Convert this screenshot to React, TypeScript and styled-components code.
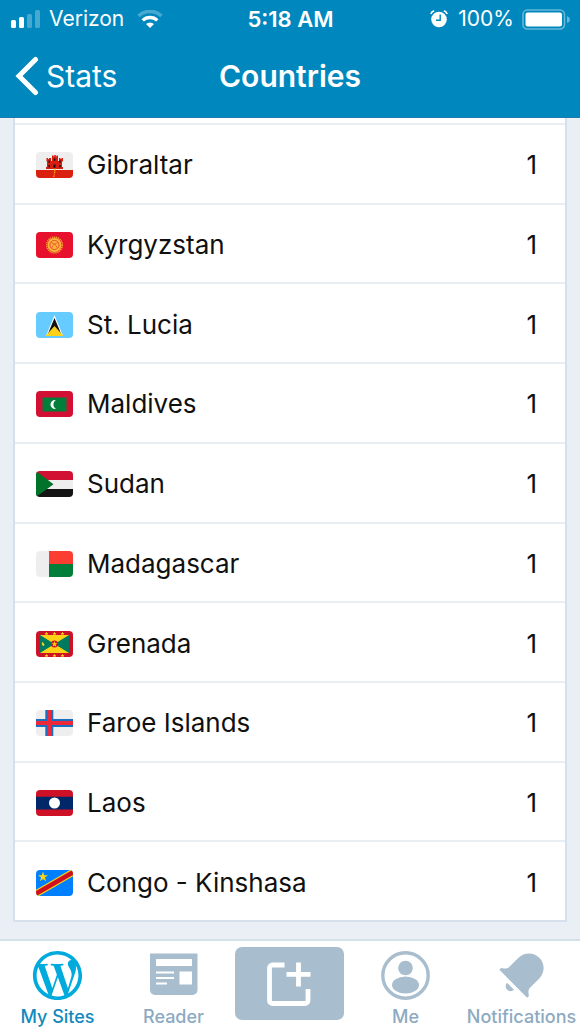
import React from "react";
import styled, { createGlobalStyle } from "styled-components";

const GlobalStyle = createGlobalStyle`
  *, *::before, *::after { box-sizing: border-box; }
  body {
    margin: 0;
    font-family: Inter, "Liberation Sans", sans-serif;
    background: #e9eff4;
    color: #101010;
  }
  svg { display: block; flex: none; }
`;

const Screen = styled.div`
  display: flex;
  flex-direction: column;
  min-height: 100vh;
`;

const Header = styled.header`
  background: #0087be;
  border-bottom: 1px solid #1a7cab;
  color: #fff;
`;

const StatusBar = styled.div`
  display: grid;
  grid-template-columns: 1fr auto 1fr;
  align-items: center;
  height: 38px;
  padding: 0 10px 0 11px;
  font-size: 21px;
  line-height: 24px;
`;

const StatusGroup = styled.div<{ $end?: boolean }>`
  display: flex;
  align-items: center;
  gap: ${(p) => (p.$end ? 8 : 9)}px;
  justify-content: ${(p) => (p.$end ? "flex-end" : "flex-start")};
`;

const Clock = styled.time`
  font-size: 22px;
  font-weight: 600;
`;

const NavBar = styled.nav`
  display: grid;
  grid-template-columns: 1fr auto 1fr;
  align-items: center;
  height: 79px;
  padding: 0 15px 3px;
`;

const BackLink = styled.a`
  display: flex;
  align-items: center;
  gap: 7px;
  justify-self: start;
  color: inherit;
  text-decoration: none;
  font-size: 30px;
  line-height: 36px;
`;

const Title = styled.h1`
  margin: 0;
  font-size: 30px;
  line-height: 36px;
  font-weight: 600;
`;

const Content = styled.main`
  display: flex;
  flex: 1;
  flex-direction: column;
  padding: 0 13px 17px;
`;

const PreviousRowEdge = styled.div`
  height: 7px;
  background: #fff;
  border: solid #d5e0ec;
  border-width: 0 2px;
  box-shadow: inset 0 -2px #e7eef4;
`;

const List = styled.ul`
  display: flex;
  flex: 1;
  flex-direction: column;
  margin: 0;
  padding: 0;
  list-style: none;
  background: #fff;
  border: solid #d5e0ec;
  border-width: 0 2px;
`;

const Row = styled.li`
  display: flex;
  flex: 1 0 79px;
  align-items: center;
  gap: 14px;
  padding: 3px 28px 0 21px;
  border-bottom: 2px solid #e7eef4;
  font-size: 26px;
  line-height: 32px;

  &:last-child { border-bottom-color: #d5e0ec; }
`;

const Flag = styled.svg`
  width: 37px;
  height: 26px;
  border-radius: 4px;
`;

const Country = styled.span`
  flex: 1;
`;

const TabBar = styled.nav`
  display: grid;
  grid-template-columns: repeat(5, minmax(0, 1fr));
  height: 90px;
  background: #fff;
  border-top: 2px solid #d3e0ea;
`;

const Tab = styled.button<{ $active?: boolean }>`
  display: flex;
  flex-direction: column;
  align-items: center;
  justify-content: flex-start;
  gap: 0;
  padding: 5px 1px 0 0;
  border: 0;
  background: none;
  color: ${(p) => (p.$active ? "#00aadc" : "#a8bece")};
  font-family: inherit;
`;

const TabLabel = styled.span<{ $active?: boolean }>`
  color: ${(p) => (p.$active ? "#1289bd" : "#8caac2")};
  font-size: 18px;
  line-height: 24px;
  font-weight: 500;
  white-space: nowrap;
`;

const NewPost = styled.button`
  display: grid;
  place-items: center;
  height: 73px;
  margin: 6px 4px 0 3px;
  padding: 0;
  border: 0;
  border-radius: 7px;
  background: #a8bece;
  color: #fff;
`;

const flags: Record<string, React.ReactNode> = {
  Gibraltar: (
    <>
      <path fill="#eee" d="M0 0h37v26H0z" />
      <path fill="#da2110" d="M0 18h37v8H0z" />
      <path
        fill="#d81e10"
        d="M10.500 6h1.500v1h1V6h2v3h1V3.500h1.500v1h.7V3h1.600v1.500h.7v-1H22V9h1V6h1.500v1h1V6H27v3.500h-1V15h1v2H10v-2h1V9.500h-.5z"
      />
      <path
        fill="#181010"
        d="M12.500 8.500H14v2.200h-1.500zM17.800 6.500h1.600v2.200h-1.600zM23.200 8.500h1.500v2.200h-1.500zM12.500 13H14v2.200h-1.500zM17.500 12.500h2v3.200h-2zM23.200 13h1.500v2.200h-1.500z"
      />
      <path fill="#ffb020" d="M18 16.500h1.400v2.300h-1v1h1v1h-1v4h-1.300v-1h.8z" />
    </>
  ),
  Kyrgyzstan: (
    <>
      <path fill="#e8112d" d="M0 0h37v26H0z" />
      <circle cx="18.500" cy="13" r="7.800" fill="none" stroke="#f4a02c" strokeWidth="1.600" strokeDasharray="1.300 .7" />
      <circle cx="18.500" cy="13" r="7" fill="#fbb33c" />
      <circle cx="18.500" cy="13" r="4.600" fill="none" stroke="#e4472c" strokeWidth=".9" />
      <path fill="none" stroke="#e4472c" strokeWidth=".7" d="M15 10.500q5 1 6.500 5.500M22 10.500q-5 1-6.500 5.500" />
    </>
  ),
  "St. Lucia": (
    <>
      <path fill="#6cf" d="M0 0h37v26H0z" />
      <path fill="#fff" d="M18.500 3 27 24H10z" />
      <path fill="#111" d="M18.500 6 26 24H11z" />
      <path fill="#fcd116" d="M18.500 14 27.500 24h-18z" />
    </>
  ),
  Maldives: (
    <>
      <path fill="#d21034" d="M0 0h37v26H0z" />
      <path fill="#007e3a" d="M6.500 6.500h24v14h-24z" />
      <path fill="#fff" d="M20 9a4.600 4.600 0 1 0 0 9 5.200 5.200 0 0 1 0-9z" />
    </>
  ),
  Sudan: (
    <>
      <path fill="#d21034" d="M0 0h37v9H0z" />
      <path fill="#eee" d="M0 9h37v9H0z" />
      <path fill="#141414" d="M0 18h37v8H0z" />
      <path fill="#007229" d="M0 0 17.500 13.300 0 26z" />
    </>
  ),
  Madagascar: (
    <>
      <path fill="#eee" d="M0 0h14v26H0z" />
      <path fill="#fc3d32" d="M13 0h24v13H13z" />
      <path fill="#007e3a" d="M13 13h24v13H13z" />
    </>
  ),
  Grenada: (
    <>
      <path fill="#ce1126" d="M0 0h37v26H0z" />
      <path fill="#fcd116" d="M4 4h29v18H4z" />
      <path fill="#007a5e" d="M4 4l14.500 9L4 22zM33 4l-14.500 9L33 22z" />
      <circle cx="18.500" cy="13" r="3.600" fill="#ce1126" />
      <path
        fill="#fcd116"
        d="M18.500 10l.8 2.200h2.200l-1.800 1.400.7 2.200-1.900-1.300-1.900 1.300.7-2.200-1.800-1.400h2.200zM6 11c2 1 3 2 2 4-2 0-2.500-2-2-4z"
      />
      <path
        fill="#fcd116"
        d="M10.500 .8l.6 1.200h1.300l-1 .9.400 1.300-1.300-.7-1.300.7.400-1.300-1-.9h1.300zM18.500 .8l.6 1.200h1.300l-1 .9.400 1.300-1.300-.7-1.300.7.400-1.300-1-.9h1.300zM26.500 .8l.6 1.200h1.300l-1 .9.400 1.300-1.300-.7-1.300.7.400-1.300-1-.9h1.300zM10.500 22.800l.6 1.200h1.300l-1 .9.400 1.300-1.300-.7-1.300.7.400-1.300-1-.9h1.300zM18.500 22.800l.6 1.200h1.300l-1 .9.400 1.300-1.300-.7-1.300.7.400-1.300-1-.9h1.300zM26.500 22.800l.6 1.200h1.300l-1 .9.400 1.300-1.300-.7-1.300.7.400-1.300-1-.9h1.300z"
      />
    </>
  ),
  "Faroe Islands": (
    <>
      <path fill="#eee" d="M0 0h37v26H0z" />
      <path stroke="#1a6fc0" strokeWidth="8" d="M13.300 0v26M0 13h37" />
      <path stroke="#ed2939" strokeWidth="4" d="M13.300 0v26M0 13h37" />
    </>
  ),
  Laos: (
    <>
      <path fill="#ce1126" d="M0 0h37v26H0z" />
      <path fill="#002868" d="M0 6.700h37v12.800H0z" />
      <circle cx="18.500" cy="13" r="5.500" fill="#fff" />
    </>
  ),
  "Congo - Kinshasa": (
    <>
      <path fill="#007fff" d="M0 0h37v26H0z" />
      <path stroke="#f7d618" strokeWidth="7" d="M-4 26 41 0" />
      <path stroke="#ce1021" strokeWidth="4.600" d="M-4 26 41 0" />
      <path fill="#f7d618" d="M7 1.500l1.200 3.700h3.800l-3.100 2.300 1.200 3.700L7 8.900l-3.100 2.300 1.200-3.700L2 5.200h3.800z" />
    </>
  ),
};

const countries = Object.keys(flags).map((name) => ({ name, views: 1 }));

const SignalIcon = () => (
  <svg width="29" height="18" viewBox="0 0 29 18" fill="#fff" aria-hidden="true">
    <rect x="0" y="10" width="5" height="8" rx="1.500" />
    <rect x="8" y="7" width="5" height="11" rx="1.500" />
    <rect x="16" y="4" width="5" height="14" rx="1.500" opacity=".28" />
    <rect x="24" y="0" width="5" height="18" rx="1.500" opacity=".28" />
  </svg>
);

const WifiIcon = () => (
  <svg width="30" height="18" viewBox="-4 0 30 18" aria-hidden="true">
    <path d="M1.500 6a16.500 16.500 0 0 1 23 0" fill="none" stroke="#fff" strokeWidth="3.600" opacity=".28" />
    <path d="M5.700 10.400a10.500 10.500 0 0 1 14.600 0" fill="none" stroke="#fff" strokeWidth="3.400" />
    <path d="M13 18l-4-4a6 6 0 0 1 8 0z" fill="#fff" />
  </svg>
);

const AlarmIcon = () => (
  <svg width="20" height="18" viewBox="0 0 20 18" aria-hidden="true">
    <circle cx="9" cy="9.500" r="7.800" fill="#fff" />
    <path d="M.8 4A5 5 0 0 1 4.200.8M17.200 4A5 5 0 0 0 13.800.8" fill="none" stroke="#fff" strokeWidth="1.600" />
    <path d="M10.200 4.500v5.700H6" fill="none" stroke="#0087be" strokeWidth="1.400" />
  </svg>
);

const BatteryIcon = () => (
  <svg width="48" height="21" viewBox="0 0 48 21" fill="#fff" aria-hidden="true">
    <rect x="1" y="1" width="41.500" height="19" rx="4.500" fill="none" stroke="#fff" strokeWidth="1.600" opacity=".4" />
    <rect x="3.500" y="3.500" width="36.500" height="14" rx="2" />
    <path d="M45 7q3 1.200 3 3.500t-3 3.500z" opacity=".4" />
  </svg>
);

const BackIcon = () => (
  <svg width="24" height="40" viewBox="0 0 24 40" fill="none" aria-hidden="true">
    <path d="M20.500 3.500 4 20l16.500 16.500" stroke="#fff" strokeWidth="5" strokeLinecap="round" />
  </svg>
);

const WordPressIcon = () => (
  <svg width="59" height="59" viewBox="0 0 24 24" fill="currentColor" aria-hidden="true">
    <path d="M12 2C6.486 2 2 6.486 2 12s4.486 10 10 10 10-4.486 10-10S17.514 2 12 2zM3.500 12c0-1.232.264-2.402.736-3.460L8.290 19.650C5.456 18.272 3.500 15.365 3.500 12zm8.500 8.500c-.834 0-1.640-.120-2.400-.345l2.550-7.410 2.613 7.157c.017.042.038.080.060.117-.884.310-1.833.480-2.823.480zm1.172-12.485c.512-.027.973-.080.973-.080.458-.055.404-.728-.054-.702 0 0-1.376.108-2.265.108-.835 0-2.240-.107-2.240-.107-.458-.026-.510.674-.053.700 0 0 .434.055.892.082l1.324 3.630-1.860 5.578-3.096-9.208c.512-.027.973-.080.973-.080.458-.055.403-.728-.055-.702 0 0-1.376.108-2.265.108-.160 0-.347-.003-.547-.010C6.418 5.025 9.030 3.500 12 3.500c2.213 0 4.228.846 5.740 2.232-.037-.002-.072-.007-.110-.007-.835 0-1.427.727-1.427 1.510 0 .700.404 1.292.835 1.993.323.566.700 1.293.700 2.344 0 .727-.280 1.572-.646 2.748l-.848 2.833-3.072-9.138zm3.100 11.332l2.597-7.506c.484-1.212.645-2.180.645-3.044 0-.313-.020-.603-.057-.874.664 1.210 1.042 2.600 1.042 4.078 0 3.136-1.700 5.874-4.227 7.347z" />
  </svg>
);

const ReaderIcon = () => (
  <svg width="59" height="59" viewBox="0 0 59 59" aria-hidden="true">
    <path d="M6 7.500h47.500V44a5 5 0 0 1-5 5H11a5 5 0 0 1-5-5z" fill="currentColor" />
    <path d="M12 13h36v7H12zM12 25.500h18v2H12zM12 31h18v2H12zM12 36.500h11v2H12zM35.500 25.500H48v13H35.500z" fill="#fff" />
  </svg>
);

const NewPostIcon = () => (
  <svg width="46" height="46" viewBox="1 0 46 46" fill="none" stroke="currentColor" strokeWidth="4.800" aria-hidden="true">
    <path d="M18.500 4H6.500a3 3 0 0 0-3 3v32.500a3 3 0 0 0 3 3H39a3 3 0 0 0 3-3V28M20.500 13.300h24M32.500 1.500v24" />
  </svg>
);

const MeIcon = () => (
  <svg width="59" height="59" viewBox="0 0 59 59" fill="currentColor" aria-hidden="true">
    <circle cx="29.500" cy="29.500" r="22.700" fill="none" stroke="currentColor" strokeWidth="3.400" />
    <circle cx="29.500" cy="22" r="7.300" />
    <ellipse cx="29.500" cy="39" rx="13.500" ry="8.600" />
  </svg>
);

const BellIcon = () => (
  <svg width="59" height="59" viewBox="0 0 24 24" fill="currentColor" aria-hidden="true">
    <path d="M6.140 14.970l2.828 2.827c-.362.362-.862.586-1.414.586-1.105 0-2-.895-2-2 0-.552.224-1.052.586-1.414zm8.867 5.324L14.300 21 3 9.700l.706-.707 1.102.157c.754.108 1.690-.122 2.077-.510l3.885-3.884c2.340-2.340 6.135-2.340 8.475 0s2.340 6.135 0 8.475l-3.885 3.886c-.388.388-.618 1.323-.510 2.077l.157 1.100z" />
  </svg>
);

export default function App() {
  return (
    <Screen>
      <GlobalStyle />
      <Header>
        <StatusBar>
          <StatusGroup>
            <SignalIcon />
            <span>Verizon</span>
            <WifiIcon />
          </StatusGroup>
          <Clock>5:18 AM</Clock>
          <StatusGroup $end>
            <AlarmIcon />
            <span>100%</span>
            <BatteryIcon />
          </StatusGroup>
        </StatusBar>
        <NavBar aria-label="Back">
          <BackLink href="#stats">
            <BackIcon />
            Stats
          </BackLink>
          <Title>Countries</Title>
        </NavBar>
      </Header>
      <Content>
        <PreviousRowEdge />
        <List>
          {countries.map(({ name, views }) => (
            <Row key={name}>
              <Flag viewBox="0 0 37 26" aria-hidden="true">
                {flags[name]}
              </Flag>
              <Country>{name}</Country>
              <span>{views}</span>
            </Row>
          ))}
        </List>
      </Content>
      <TabBar aria-label="Main">
        <Tab type="button" $active aria-current="page">
          <WordPressIcon />
          <TabLabel $active>My Sites</TabLabel>
        </Tab>
        <Tab type="button">
          <ReaderIcon />
          <TabLabel>Reader</TabLabel>
        </Tab>
        <NewPost type="button" aria-label="New post">
          <NewPostIcon />
        </NewPost>
        <Tab type="button">
          <MeIcon />
          <TabLabel>Me</TabLabel>
        </Tab>
        <Tab type="button">
          <BellIcon />
          <TabLabel>Notifications</TabLabel>
        </Tab>
      </TabBar>
    </Screen>
  );
}
